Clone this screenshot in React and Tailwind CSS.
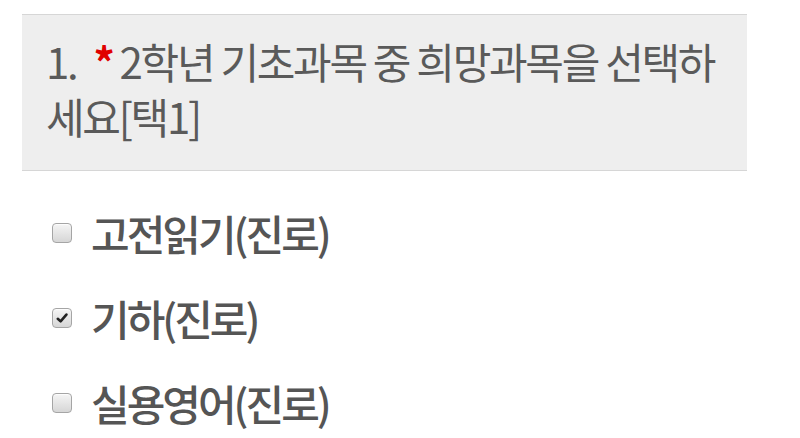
import React from 'react';

const options = [
  { label: '고전읽기(진로)', checked: false },
  { label: '기하(진로)', checked: true },
  { label: '실용영어(진로)', checked: false },
];

const Checkbox = ({ checked }) => (
  <span className="flex h-[20px] w-[20px] shrink-0 items-center justify-center rounded-[4px] border border-[#a5a5a5] bg-gradient-to-b from-[#f5f5f5] to-[#d6d6d6] shadow-[inset_0_1px_1px_rgba(255,255,255,0.8)]">
    {checked && (
      <svg viewBox="0 0 12 12" className="h-[12px] w-[12px]">
        <path d="M1.8 6.8 L4.6 9.4 L10.4 2.6" fill="none" stroke="#222" strokeWidth="2.6" strokeLinecap="round" strokeLinejoin="round" />
      </svg>
    )}
  </span>
);

export default function App() {
  return (
    <div
      className="h-[438px] w-[800px] overflow-hidden bg-white"
      style={{ fontFamily: '"Noto Sans CJK KR", "Noto Sans", sans-serif' }}
    >
      <div className="pt-[14px] pl-[22px] w-[747px]">
        <div className="border-y border-[#d6d6d6] bg-[#eeeeee] px-[24px] pt-[18px] pb-[27px]">
          <h2 className="whitespace-nowrap text-[42px] leading-[55px] tracking-[-2.3px] text-[#5a5a5a]">
            1. <span className="ml-[10px] font-bold text-[#e00000]">*</span> 2학년 기초과목 중 희망과목을 선택하
            <br />
            세요[택1]
          </h2>
        </div>
        <ul className="mt-[32px] flex flex-col gap-[26px] pl-[30px]">
          {options.map((o) => (
            <li key={o.label} className="flex h-[59px] items-center gap-[19px]">
              <Checkbox checked={o.checked} />
              <span className="text-[42px] font-medium tracking-[-3px] text-[#555]">{o.label}</span>
            </li>
          ))}
        </ul>
      </div>
    </div>
  );
}
